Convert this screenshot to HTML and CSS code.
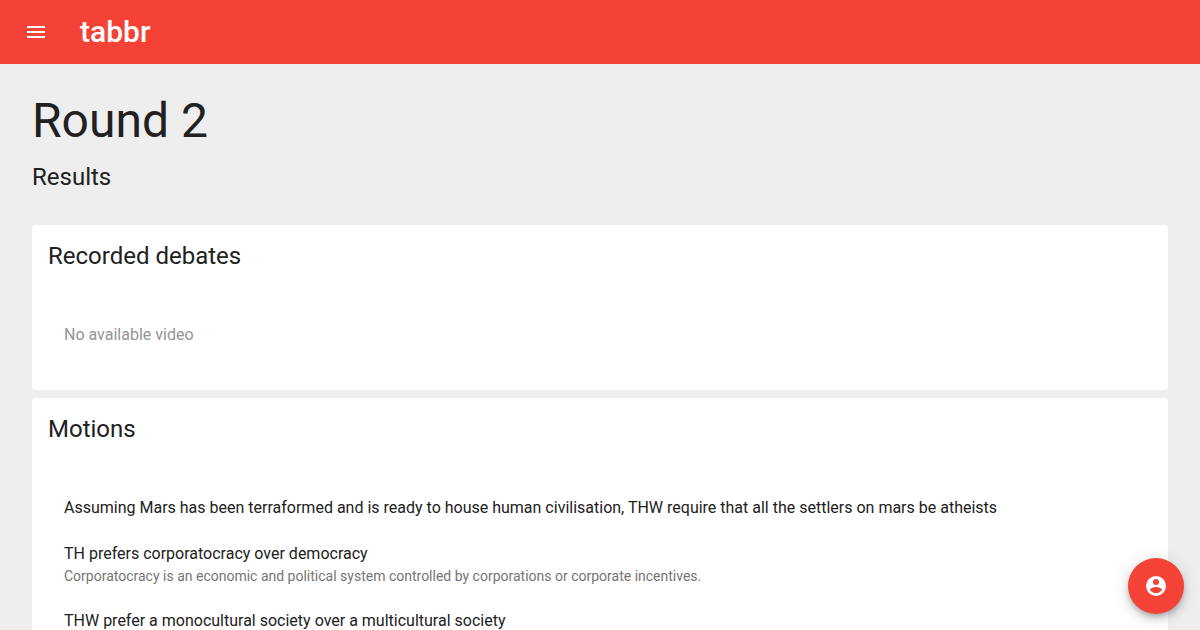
FILE: index.html
```html
<!DOCTYPE html>
<html lang="en">
<head>
<meta charset="utf-8">
<meta name="viewport" content="width=device-width, initial-scale=1">
<title>Round 2 - tabbr</title>
<link rel="stylesheet" href="styles.css">
</head>
<body>
<header class="app-bar">
  <button class="menu-button" type="button" aria-label="Open menu">
    <svg class="icon" viewBox="0 0 24 24" aria-hidden="true"><path d="M3 6h18v2H3zM3 11h18v2H3zM3 16h18v2H3z"/></svg>
  </button>
  <a class="brand" href="#">tabbr</a>
</header>
<main class="page">
  <h1 class="page-title">Round 2</h1>
  <p class="page-subtitle">Results</p>
  <div class="cards">
    <section class="card">
      <h2 class="card-title">Recorded debates</h2>
      <ul class="list">
        <li class="item item-empty">No available video</li>
      </ul>
    </section>
    <section class="card">
      <h2 class="card-title">Motions</h2>
      <ul class="list">
        <li class="item">Assuming Mars has been terraformed and is ready to house human civilisation, THW require that all the settlers on mars be atheists</li>
        <li class="item item-with-note">TH prefers corporatocracy over democracy
          <p class="item-note">Corporatocracy is an economic and political system controlled by corporations or corporate incentives.</p>
        </li>
        <li class="item">THW prefer a monocultural society over a multicultural society</li>
      </ul>
    </section>
  </div>
</main>
<button class="fab" type="button" aria-label="Account">
  <svg class="icon" viewBox="0 0 24 24" aria-hidden="true"><path fill-rule="evenodd" d="M12 2a10 10 0 1 0 0 20 10 10 0 0 0 0-20zM12 5a3 3 0 1 1 0 6 3 3 0 0 1 0-6zM12 19.200c-2.500 0-4.710-1.280-6-3.220.03-1.990 4-3.080 6-3.080 1.990 0 5.970 1.090 6 3.080-1.290 1.940-3.500 3.220-6 3.220z"/></svg>
</button>
</body>
</html>
```

FILE: styles.css
```css
* {
  box-sizing: border-box;
}

body {
  margin: 0;
  background: #eeeeee;
  color: #212121;
  font-family: Roboto, "Liberation Sans", sans-serif;
  font-size: 16px;
  line-height: 20px;
}

h1, h2, p, ul {
  margin: 0;
  padding: 0;
  font-weight: 400;
}

button {
  display: flex;
  align-items: center;
  justify-content: center;
  padding: 0;
  border: 0;
  border-radius: 50%;
  color: #ffffff;
  cursor: pointer;
}

.icon {
  width: 24px;
  height: 24px;
  fill: currentColor;
}

.app-bar {
  display: flex;
  align-items: center;
  gap: 20px;
  height: 64px;
  padding: 0 12px;
  background: #f44336;
}

.menu-button {
  width: 48px;
  height: 48px;
  background: transparent;
}

.brand {
  color: #ffffff;
  font-size: 30px;
  font-weight: 500;
  line-height: 36px;
  text-decoration: none;
}

.page {
  padding: 32px;
}

.page-title {
  font-size: 48px;
  line-height: 50px;
}

.page-subtitle {
  margin-top: 15px;
  font-size: 24px;
  line-height: 32px;
}

.cards {
  display: grid;
  gap: 8px;
  margin-top: 32px;
}

.card {
  border-radius: 4px;
  background: #ffffff;
}

.card-title {
  padding: 15px 16px;
  font-size: 24px;
  line-height: 32px;
}

.list {
  padding: 24px 16px 31px;
  list-style: none;
}

.item {
  min-height: 48px;
  padding: 14px 16px;
}

.item-with-note {
  padding-top: 12px;
  padding-bottom: 11px;
}

.item-empty {
  color: #949494;
}

.item-note {
  margin-top: 2px;
  color: #757575;
  font-size: 14px;
}

.fab {
  position: fixed;
  right: 16px;
  bottom: 16px;
  width: 56px;
  height: 56px;
  background: #f44336;
  box-shadow: 0 3px 5px -1px rgba(0, 0, 0, 0.2), 0 6px 10px rgba(0, 0, 0, 0.14), 0 1px 18px rgba(0, 0, 0, 0.12);
}
```
